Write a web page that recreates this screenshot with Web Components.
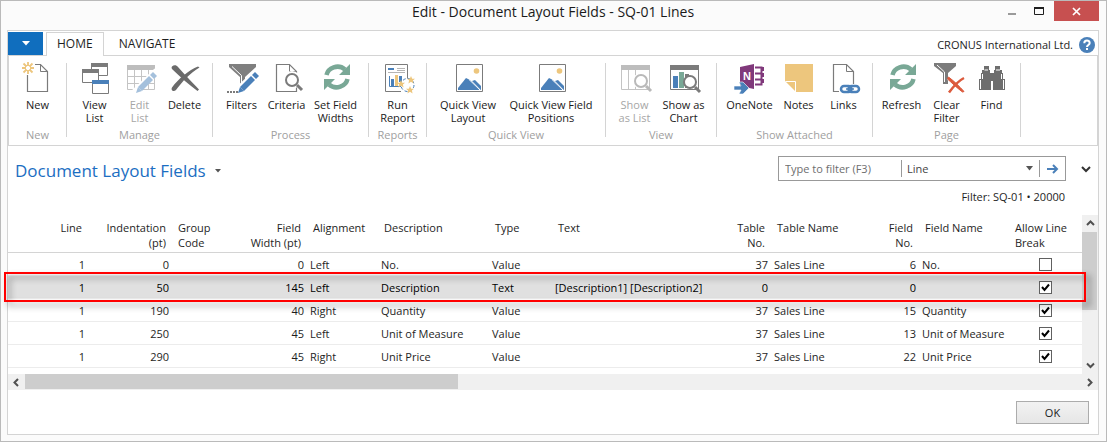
<!DOCTYPE html>
<html lang="en">
<head>
<meta charset="utf-8">
<title>Edit - Document Layout Fields - SQ-01 Lines</title>
<style>
html, body { margin: 0; height: 100%; }
body { font: 11px/13px "Open Sans", "Noto Sans", sans-serif; color: #1e1e1e; background: #fbfbfb; }
</style>
</head>
<body>
<app-window heading="Edit - Document Layout Fields - SQ-01 Lines">
  <ribbon-tabs company="CRONUS International Ltd."></ribbon-tabs>
  <ribbon-bar>
    <ribbon-group label="New">
      <ribbon-button icon="new">New</ribbon-button>
    </ribbon-group>
    <ribbon-group label="Manage" compact>
      <ribbon-button icon="viewlist">View<br>List</ribbon-button>
      <ribbon-button icon="editlist" disabled>Edit<br>List</ribbon-button>
      <ribbon-button icon="delete">Delete</ribbon-button>
    </ribbon-group>
    <ribbon-group label="Process">
      <ribbon-button icon="filters">Filters</ribbon-button>
      <ribbon-button icon="criteria">Criteria</ribbon-button>
      <ribbon-button icon="refresh" size="m">Set Field<br>Widths</ribbon-button>
    </ribbon-group>
    <ribbon-group label="Reports">
      <ribbon-button icon="report">Run<br>Report</ribbon-button>
    </ribbon-group>
    <ribbon-group label="Quick View">
      <ribbon-button icon="picture" size="l">Quick View<br>Layout</ribbon-button>
      <ribbon-button icon="picture" size="xl">Quick View Field<br>Positions</ribbon-button>
    </ribbon-group>
    <ribbon-group label="View">
      <ribbon-button icon="showlist" disabled>Show<br>as List</ribbon-button>
      <ribbon-button icon="showchart" size="m">Show as<br>Chart</ribbon-button>
    </ribbon-group>
    <ribbon-group label="Show Attached">
      <ribbon-button icon="onenote" size="m">OneNote</ribbon-button>
      <ribbon-button icon="notes">Notes</ribbon-button>
      <ribbon-button icon="links">Links</ribbon-button>
    </ribbon-group>
    <ribbon-group label="Page">
      <ribbon-button icon="refresh">Refresh</ribbon-button>
      <ribbon-button icon="clearfilter">Clear<br>Filter</ribbon-button>
      <ribbon-button icon="find">Find</ribbon-button>
    </ribbon-group>
  </ribbon-bar>
  <page-heading>Document Layout Fields<filter-box slot="filter"></filter-box></page-heading>
  <filter-status>Filter: SQ-01 • 20000</filter-status>
  <list-view></list-view>
  <dialog-footer></dialog-footer>
</app-window>

<script>
const G = '#7b7b7b', B = '#4a80b9', Y = '#edc67d', T = '#79a896';
const page = (fold = G) => `<path d="M5.5 2.5H18.5L25.5 9.5V29.5H5.5Z" fill="#fff" stroke="${fold}" stroke-width="1.2"/><path d="M18.5 2.5V9.5H25.5" fill="none" stroke="${fold}"/>`;
const pencil = (c) => `<path d="M12 31L14 25L18 29Z" fill="${c}"/><path d="M16 27L27 16" stroke="${c}" stroke-width="5.6"/><path d="M28 15L31 12" stroke="${c}" stroke-width="5.6"/>`;
const lens = (x, y, c) => `<circle cx="${x}" cy="${y}" r="6" fill="#fff" stroke="${c}" stroke-width="2"/><path d="M${x + 5} ${y + 5}L${x + 10} ${y + 10}" stroke="${c}" stroke-width="3"/>`;
const star = (x, y) => `<path transform="translate(${x} ${y})" d="M0-4L1.2-1.3 4-1.2 1.9.6 2.6 3.4 0 1.8-2.6 3.4-1.9.6-4-1.2-1.2-1.3Z" fill="${Y}"/>`;
const ICONS = {
  new: `<path d="M5.5 13V29.5H25.5V9.5L18.5 2.5H13" fill="none" stroke="${G}" stroke-width="1.2"/><path d="M18.5 2.5V9.5H25.5" fill="none" stroke="${G}"/>
    <g stroke="${Y}" stroke-width="1.8"><path d="M6 0V4M6 8V12M0 6H4M8 6H12M1.5 1.5L4.5 4.5M7.5 7.5L10.5 10.5M10.5 1.5L7.5 4.5M4.5 7.5L1.5 10.5"/></g><circle cx="6" cy="6" r="2.8" fill="none" stroke="${Y}"/>`,
  viewlist: `<g fill="#fff" stroke="${G}"><path d="M12.5 1.5H28.5V13.5H12.5Z"/><path d="M3.5 7.5H19.5V20.5H3.5Z"/><path d="M13.5 18.5H29.5V31.5H13.5Z"/></g><path d="M12 1H29V5H12ZM3 7H20V11H3Z" fill="${G}"/><path d="M13 18H30V22H13Z" fill="${B}"/>`,
  editlist: `<path d="M3 3H31V8H3Z" fill="#bdbdbd"/><path d="M3.5 8V27.5H30.5V8M3 14.5H31M3 21.5H31M10.5 8V28M17.5 8V28M24.5 8V28" fill="none" stroke="#c4c4c4"/><path d="M10 31L33 9" stroke="#fff" stroke-width="7"/>${pencil('#a4c0dc')}`,
  delete: `<path d="M3 4.5C5 2.5 7.5 3 9 5C14 11 22 19 30 27.5L28.5 29C20 23 11 14.5 3.5 7.5C2.5 6.5 2.3 5.5 3 4.5Z" fill="#6b6b6b"/><path d="M30.5 5.5L29 4.5C20 8 9 17 3 25.5C1.5 28 4.5 30.5 7 28C13 20 21 11 30.5 5.5Z" fill="#6b6b6b"/>`,
  filters: `<path d="M3 2H30V5L19 15V25L14 22V15L3 5Z" fill="#7f7f7f"/><path d="M6 4.5L15.5 13.5V22" fill="none" stroke="#fff"/><path d="M10 31L33 9" stroke="#fff" stroke-width="8"/>${pencil(B)}<path d="M1 30H12" stroke="${G}" stroke-width="2" stroke-dasharray="2 1"/>`,
  criteria: page() + `<circle cx="21" cy="18" r="9" fill="#fff"/>` + lens(21, 18, G),
  refresh: `<g fill="none" stroke="${T}" stroke-width="4.5"><path d="M6.5 13C8 6 18 1.5 25 7.5"/><path d="M27.5 17C26 24 16 28.5 9 22.5"/></g><path d="M30 2V13H19Z M4 28V17H15Z" fill="${T}"/>`,
  report: `<path d="M3.5 2.5H25.5V29.5H3.5Z" fill="#fff" stroke="${G}"/><path d="M6 7H12" stroke="${B}" stroke-width="2"/><path d="M15 6.5H23M6 10.5H23M15 8.5H23" stroke="#b5b5b5"/><path d="M7.5 14V24.5H20" fill="none" stroke="${B}"/><path d="M9 17H12V24H9ZM17 14H20V20H17Z" fill="${B}"/><path d="M13 13H16V24H13Z" fill="${Y}"/><path d="M19 21H34V32H19Z" fill="#fff"/><circle cx="25.5" cy="23" r="6.5" fill="#fff" stroke="${B}" stroke-dasharray="3 2"/>${star(19, 22)}${star(29, 18)}${star(28, 28)}`,
  picture: `<path d="M4.5 2.5H30.5V29.5H4.5Z" fill="#fff" stroke="${G}"/><circle cx="24.5" cy="9" r="2.8" fill="${Y}"/><path d="M6 28V26L14 16L18 18L29 28Z" fill="${B}"/><path d="M20 19L23 18L29 24V28Z" fill="${B}"/><path d="M17 17.5L28 28" stroke="#fff"/>`,
  showlist: `<path d="M2 3H31V8H2Z" fill="#bdbdbd"/><path d="M2.5 8V27.5H30.5V8M9.5 8V28M16.5 8V28" fill="none" stroke="#c4c4c4"/><circle cx="22" cy="19" r="8" fill="#fff"/>${lens(22, 19, '#b9b9b9')}`,
  showchart: `<path d="M2 3H31V8H2Z" fill="${G}"/><path d="M2.5 8V27.5H30.5V8" fill="none" stroke="${G}"/><path d="M5 14H10V26H5Z" fill="${B}"/><path d="M11 10H16V26H11Z" fill="${T}"/><path d="M17 12H21V26H17Z" fill="${G}"/>${lens(22, 20, G)}`,
  onenote: `<path d="M6 5L20 2V27L6 24Z" fill="#80397b"/><path d="M21 5.5H27.5V22.5H21M21 11.5H27M21 17.5H27" fill="none" stroke="#80397b" stroke-width="2"/><path d="M28 5H30V9H28ZM28 11H30V15H28ZM28 17H30V21H28Z" fill="#80397b"/><text x="9" y="18" font-family="Liberation Sans, sans-serif" font-weight="bold" font-size="11" fill="#fff">N</text><path d="M0 24H7L5 20H9L15 26L9 32H5L7 28H0Z" fill="${B}" stroke="#fff" stroke-width=".6"/>`,
  notes: `<path d="M2 2H30V30H2Z" fill="${Y}"/><path d="M2 19L13 30H2Z" fill="#fff"/><path d="M2.5 19.5H12.5V30" fill="none" stroke="#fff"/>`,
  links: page() + `<path d="M11 22H33V32H11Z" fill="#fff"/><g fill="none" stroke="${B}" stroke-width="2.5"><rect x="13" y="24" width="10.5" height="6" rx="3"/><rect x="20.5" y="24" width="10.5" height="6" rx="3"/></g><path d="M18 27H26" stroke="${B}" stroke-width="1.5"/>`,
  clearfilter: `<path d="M3 1H25V4L17 11V22H12V11L3 4Z" fill="#7b7b7b"/><path d="M6 3L13.5 10V20" fill="none" stroke="#fff"/><path d="M18 16L32 30M33 16L18 31" stroke="#fff" stroke-width="5"/><path d="M17.5 15C23 19 29 25 33 29.5L31.5 30C26 26 20 20 16.5 17Z" fill="#dc5a3c" stroke="#dc5a3c"/><path d="M33 16C27 19 22 25 18 30.5" stroke="#dc5a3c" stroke-width="2.5" fill="none"/>`,
  find: `<g fill="#6e6e6e"><path d="M8 4H13V8H14V14H15V28H3V17H5V11H6V8H8ZM19 4H24V8H26V11H27V17H29V28H17V14H18V8H19Z"/><path d="M14 11H18V19H14Z"/></g><path d="M6.5 12V17M4.5 18V27M8.5 8H12M25.5 12V17M27.5 18V27M20 8H24" stroke="#fff" stroke-width="1"/>`
};

function define(name, html, setup) {
  const template = document.createElement('template');
  template.innerHTML = html;
  customElements.define(name, class extends HTMLElement {
    constructor() { super(); this.attachShadow({ mode: 'open' }); }
    connectedCallback() {
      if (this.shadowRoot.firstChild) return;
      this.shadowRoot.append(template.content.cloneNode(true));
      if (setup) setup(this, this.shadowRoot);
    }
  });
}

define('app-window', `<style>
  :host { display: flex; flex-direction: column; min-height: 100vh; box-sizing: border-box; border: 1px solid #bababa; padding: 0 7px 6px 6px; background: #fbfbfb; }
  header { display: grid; grid-template-columns: 1fr auto 1fr; height: 29px; }
  h1 { grid-column: 2; margin: 0; font-size: 14px; line-height: 22px; font-weight: 400; color: #1a1a1a; }
  .controls { display: flex; justify-content: flex-end; height: 20px; }
  button { border: 0; padding: 0; background: none; width: 28px; }
  .close { width: 45px; background: #c75050; }
  svg { display: block; margin: auto; }
  main { flex: 1; display: flex; flex-direction: column; border: 1px solid #d4d4d4; background: #fff; }
</style>
<header><h1></h1><div class="controls">
  <button aria-label="Minimize"><svg width="28" height="20"><path d="M10 13H18" stroke="#9a9a9a" stroke-width="2"/></svg></button>
  <button aria-label="Maximize"><svg width="28" height="20"><path d="M8.5 7.5H17.5V13.5H8.5Z" fill="none" stroke="#1e1e1e"/><path d="M8 7H18" stroke="#1e1e1e" stroke-width="2"/></svg></button>
  <button class="close" aria-label="Close"><svg width="45" height="20"><path d="M19 7L26 14M26 7L19 14" stroke="#fff" stroke-width="1.7"/></svg></button>
</div></header>
<main><slot></slot></main>`, (el, root) => { root.querySelector('h1').textContent = el.getAttribute('heading'); });

define('ribbon-tabs', `<style>
  :host { display: flex; align-items: stretch; height: 23px; padding-top: 1px; border-bottom: 1px solid #d4d4d4; }
  nav { display: flex; }
  button { font: inherit; font-size: 12px; color: inherit; background: #fff; border: 1px solid transparent; padding: 0 10px; line-height: 22px; }
  .menu { width: 35px; background: #106ebe; padding: 0; margin-right: 3px; border: 0; }
  .active { border-color: #d4d4d4; border-bottom: 0; margin-bottom: -1px; padding-bottom: 1px; margin-right: 4px; }
  .company { margin-left: auto; display: flex; align-items: center; gap: 6px; padding: 2px 3px 0 0; }
  .help { padding: 0; width: 16px; height: 16px; border: 0; }
  svg { display: block; margin: auto; }
</style>
<nav><button class="menu" aria-label="Application menu"><svg width="8" height="5"><path d="M0 0H8L4 4.5Z" fill="#fff"/></svg></button>
<button class="active">HOME</button><button>NAVIGATE</button></nav>
<div class="company"><span></span><button class="help" aria-label="Help"><svg width="16" height="16"><circle cx="8" cy="8" r="8" fill="#4a80b9"/><path d="M5.3 6.2C5.3 2.6 10.7 2.7 10.7 6C10.7 8 8 8 8 10" fill="none" stroke="#fff" stroke-width="2"/><path d="M7 11H9V13H7Z" fill="#fff"/></svg></button></div>`,
(el, root) => { root.querySelector('span').textContent = el.getAttribute('company'); });

define('ribbon-bar', `<style>
  :host { display: flex; border: 1px solid #d4d4d4; border-top: 0; padding: 7px 0 4px; height: 78px; }
</style><slot></slot>`);

define('ribbon-group', `<style>
  :host { display: flex; flex-direction: column; justify-content: space-between; padding: 0 7px 0 6px; background: linear-gradient(#d4d4d4, #d4d4d4) right top / 1px calc(100% - 4px) no-repeat; }
  :host([compact]) { padding: 0 6px 0 5px; }
  .items { display: flex; }
  .label { text-align: center; color: #a0a0a0; line-height: 13px; white-space: nowrap; }
</style><div class="items"><slot></slot></div><div class="label"></div>`,
(el, root) => { root.querySelector('.label').textContent = el.getAttribute('label'); });

define('ribbon-button', `<style>
  :host { display: block; width: 45px; }
  :host([size=m]) { width: 53px; }
  :host([size=l]) { width: 70px; }
  :host([size=xl]) { width: 96px; }
  button { display: flex; flex-direction: column; align-items: center; width: 100%; padding: 0; border: 0; background: none; font: inherit; color: #1a1a1a; white-space: nowrap; }
  button:disabled { color: #a6a6a6; }
  svg { flex: none; width: 32px; height: 32px; overflow: visible; margin: -1px 0 4px; }
</style><button><svg viewBox="0 0 32 32" aria-hidden="true"></svg><span><slot></slot></span></button>`,
(el, root) => {
  root.querySelector('svg').innerHTML = ICONS[el.getAttribute('icon')];
  root.querySelector('button').disabled = el.hasAttribute('disabled');
});

define('page-heading', `<style>
  :host { display: flex; align-items: flex-start; padding: 10px 7px 0 7px; height: 32px; }
  h2 { margin: 0; font-size: 17px; line-height: 30px; font-weight: 400; color: #1b6ec2; white-space: nowrap; }
  button { border: 0; background: none; padding: 0; }
  .menu { margin: 13px 0 0 9px; }
  .expand { margin: 9px 0 0 15px; }
  svg { display: block; }
  ::slotted(filter-box) { margin-left: auto; }
</style><h2><slot></slot></h2><button class="menu" aria-label="Page menu"><svg width="6" height="4"><path d="M0 0H6L3 3.5Z" fill="#555"/></svg></button>
<slot name="filter"></slot><button class="expand" aria-label="Expand filters"><svg width="10" height="8"><path d="M1 2L5 6L9 2" fill="none" stroke="#333" stroke-width="2"/></svg></button>`);

define('filter-box', `<style>
  :host { display: flex; align-items: center; box-sizing: border-box; width: 288px; height: 25px; border: 1px solid #999; background: #fff; }
  input, select, button { font: inherit; font-size: 11px; border: 0; padding: 0; margin: 0; background: none; outline: 0; height: 17px; box-sizing: border-box; }
  input { width: 122px; padding-left: 6px; color: #666; }
  input::placeholder { color: #6e6e6e; opacity: 1; }
  .pick { flex: 1; display: grid; align-items: center; border: solid #999; border-width: 0 1px; }
  .pick > * { grid-area: 1 / 1; }
  select { appearance: none; width: 100%; padding-left: 5px; color: #444; }
  .pick svg { justify-self: end; margin-right: 6px; pointer-events: none; }
  button { width: 25px; }
  svg { display: block; margin: 0 auto; }
</style><input type="text" placeholder="Type to filter (F3)" aria-label="Type to filter">
<div class="pick"><select aria-label="Filter field"><option>Line</option><option>Indentation (pt)</option><option>Description</option></select><svg width="7" height="5"><path d="M0 0H7L3.5 4.5Z" fill="#555"/></svg></div>
<button aria-label="Apply filter"><svg width="12" height="10"><path d="M0 5H10M6 1L10 5L6 9" fill="none" stroke="#4a80b9" stroke-width="2"/></svg></button>`);

define('filter-status', `<style>
  :host { display: block; text-align: right; padding: 2px 33px 12px; line-height: 13px; }
</style><slot></slot>`);

define('scroll-bar', `<style>
  :host { display: flex; background: #f0f0f0; }
  :host([vertical]) { flex-direction: column; width: 16px; }
  button { border: 0; padding: 0; background: none; width: 17px; height: 16px; }
  :host([vertical]) button { width: 16px; height: 17px; }
  svg { display: block; margin: auto; }
  .track { flex: 1; display: flex; }
  .thumb { background: #cdcdcd; width: 41%; margin-bottom: 1px; }
  :host([vertical]) .thumb { width: 15px; height: 62%; margin: 0 1px 0 0; }
  path { fill: none; stroke: #505050; stroke-width: 2; }
</style><button aria-label="Back"><svg width="9" height="9"><path/></svg></button><div class="track"><div class="thumb"></div></div><button aria-label="Forward"><svg width="9" height="9"><path/></svg></button>`,
(el, root) => {
  const [back, forward] = root.querySelectorAll('path');
  const v = el.hasAttribute('vertical');
  back.setAttribute('d', v ? 'M1 6L4.5 2.5L8 6' : 'M6 1L2.5 4.5L6 8');
  forward.setAttribute('d', v ? 'M1 2.5L4.5 6L8 2.5' : 'M3 1L6.5 4.5L3 8');
});

const COLUMNS = [
  ['Line', 80, 'r'], ['Indentation<br>(pt)', 84, 'r'], ['Group<br>Code', 60], ['Field<br>Width (pt)', 75, 'r'],
  ['Alignment', 71], ['Description', 111], ['Type', 63], ['Text', 0], ['Table<br>No.', 46, 'r'],
  ['Table Name', 104], ['Field<br>No.', 44, 'r'], ['Field Name', 90], ['Allow Line<br>Break', 73, 'c']
];
const ROWS = [
  ['1', '0', '', '0', 'Left', 'No.', 'Value', '', '37', 'Sales Line', '6', 'No.', false],
  ['1', '50', '', '145', 'Left', 'Description', 'Text', '[Description1] [Description2]', '0', '', '0', '', true],
  ['1', '190', '', '40', 'Right', 'Quantity', 'Value', '', '37', 'Sales Line', '15', 'Quantity', true],
  ['1', '250', '', '45', 'Left', 'Unit of Measure', 'Value', '', '37', 'Sales Line', '13', 'Unit of Measure', true],
  ['1', '290', '', '45', 'Right', 'Unit Price', 'Value', '', '37', 'Sales Line', '22', 'Unit Price', true]
];
const SELECTED = 1;

define('list-view', `<style>
  :host { display: grid; grid-template-columns: 1fr 16px; }
  table { width: 100%; table-layout: fixed; border-collapse: separate; border-spacing: 0; }
  th { font-weight: 400; text-align: left; vertical-align: top; line-height: 15px; height: 32px; padding: 5px 6px 0; border-bottom: 1px solid #d4d4d4; white-space: nowrap; }
  td { height: 22px; padding: 0 3px; line-height: 15px; border-bottom: 1px solid #ececec; white-space: nowrap; }
  .r { text-align: right; }
  td.c { text-align: center; }
  tr.selected { position: relative; z-index: 1; color: #000; }
  tr.selected td { background: #e0e0e0; }
  .callout { position: absolute; inset: -4px -4px -3px -4px; border: 2px solid #f00; filter: drop-shadow(4px 4px 3px rgba(0, 0, 0, .45)); pointer-events: none; }
  input { appearance: none; display: block; width: 13px; height: 13px; margin: 0 auto; border: 1px solid #606060; background: #fff; }
  input:checked { background: #fff url("data:image/svg+xml,%3Csvg xmlns='http://www.w3.org/2000/svg' viewBox='0 0 11 11'%3E%3Cpath d='M2 5L4.5 8L9 2.5' fill='none' stroke='%23000' stroke-width='2'/%3E%3C/svg%3E"); }
  .h { grid-column: 1 / 3; height: 16px; }
  .body { padding-bottom: 6px; }
</style><div class="body"><table><colgroup></colgroup><thead><tr></tr></thead><tbody></tbody></table></div><scroll-bar vertical></scroll-bar><scroll-bar class="h"></scroll-bar>`,
(el, root) => {
  root.querySelector('colgroup').innerHTML = COLUMNS.map(c => c[1] ? `<col style="width:${c[1]}px">` : '<col>').join('');
  root.querySelector('thead tr').innerHTML = COLUMNS.map(c => `<th class="${c[2] || ''}" scope="col">${c[0]}</th>`).join('');
  root.querySelector('tbody').innerHTML = ROWS.map((row, r) => `<tr class="${r === SELECTED ? 'selected' : ''}">` + row.map((v, i) =>
    `<td class="${COLUMNS[i][2] || ''}">` + (typeof v === 'boolean' ? `<input type="checkbox" aria-label="Allow Line Break" ${v ? 'checked' : ''}>` : v)
    + (r === SELECTED && i === 0 ? '<div class="callout"></div>' : '') + '</td>').join('') + '</tr>').join('');
});

define('dialog-footer', `<style>
  :host { display: flex; justify-content: flex-end; padding: 11px 9px 9px; }
  button { font: inherit; color: #1a1a1a; width: 73px; height: 23px; padding: 0; border: 1px solid #acacac; background: linear-gradient(#f2f2f2, #e6e6e6); }
</style><button>OK</button>`);
</script>
</body>
</html>
